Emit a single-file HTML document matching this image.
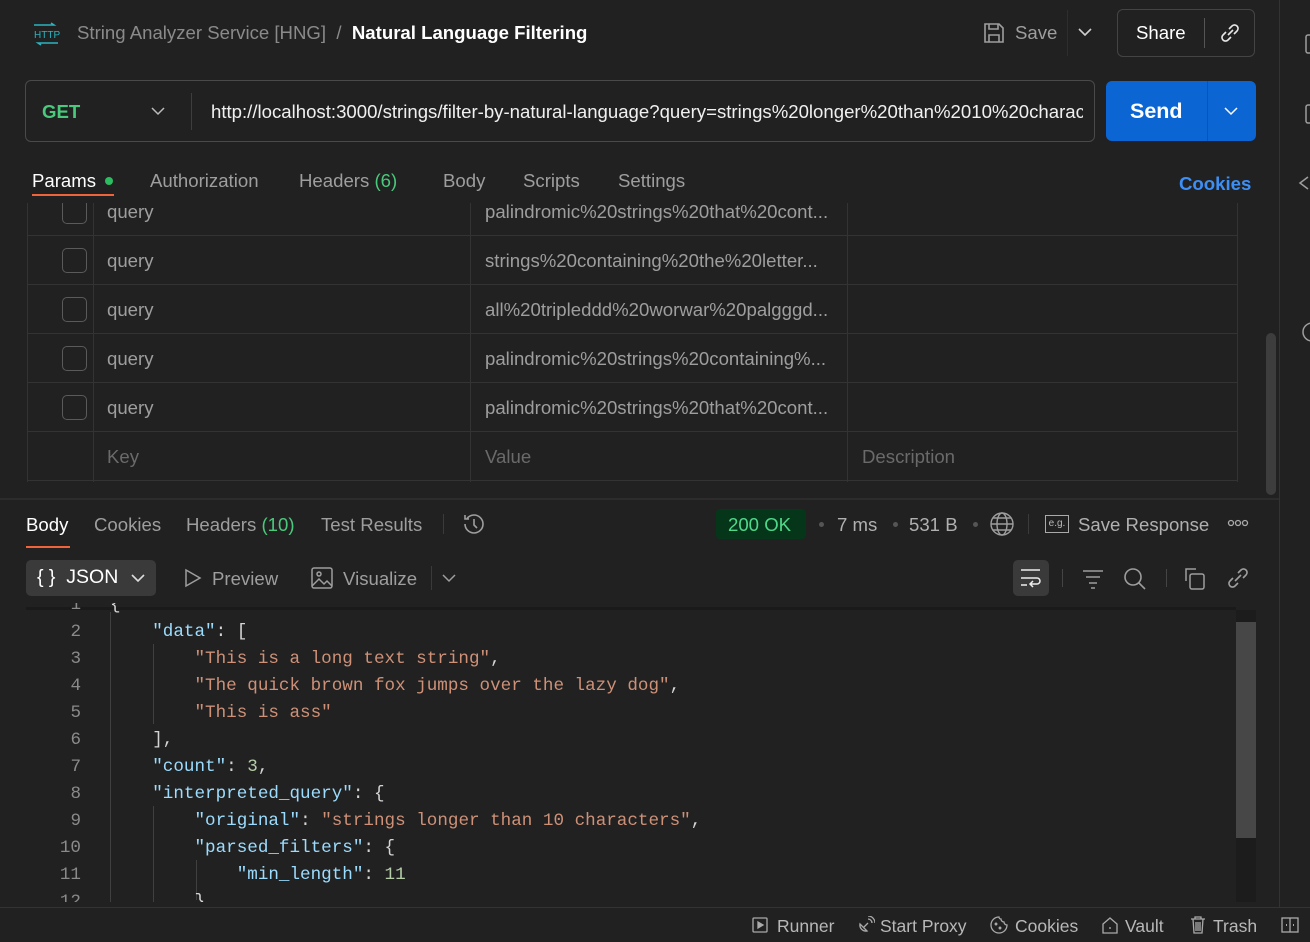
<!DOCTYPE html>
<html><head><meta charset="utf-8"><style>
*{box-sizing:border-box;margin:0;padding:0}
body{width:1310px;height:942px;background:#212121;font-family:"Liberation Sans",sans-serif;color:#e6e6e6;position:relative;overflow:hidden}
.a{position:absolute;white-space:nowrap}
.g{color:#9e9e9e}
.f{font-size:18.6px}
.mono{font-family:"Liberation Mono",monospace;font-size:17.6px}
.k{color:#9cdcfe}.s{color:#ce9178}.n{color:#b5cea8}.p{color:#d4d4d4}
.row{position:absolute;left:27px;width:1210px;height:49px;border-bottom:1px solid #333}
.cb{position:absolute;left:35px;top:12px;width:25px;height:25px;border:1px solid #5a5a5a;border-radius:5px}
.vl{position:absolute;width:1px;background:#333}
.dot{position:absolute;width:5px;height:5px;border-radius:50%;background:#555}
</style></head><body>
<div class="a" style="left:1279px;top:0;width:1px;height:908px;background:#333"></div>
<svg class="a" style="left:1296px;top:30px" width="14" height="320" fill="none" stroke="#9e9e9e" stroke-width="1.5"><rect x="10" y="5" width="10" height="18" rx="2"/><rect x="10" y="75" width="10" height="18" rx="2"/><path d="M12 147l-8 6 8 6"/><circle cx="16" cy="302" r="9"/></svg>
<svg class="a" style="left:32px;top:22px" width="28" height="24" fill="none" stroke="#2bb3c0" stroke-width="1.5"><path d="M2 3h20l-3-2M26 21H6l3 2"/><text x="2" y="16" font-size="10" fill="#2bb3c0" stroke="none" font-family="Liberation Sans">HTTP</text></svg>
<div class="a f" style="left:77px;top:22px;color:#8a8a8a">String Analyzer Service [HNG]&nbsp; /&nbsp; <b style="color:#fff">Natural Language Filtering</b></div>
<svg class="a" style="left:982px;top:21px" width="24" height="24" fill="none" stroke="#9e9e9e" stroke-width="1.6"><path d="M3 3h14l4 4v14H3z"/><path d="M7 3v5h9V3M7 21v-7h10v7"/></svg>
<div class="a g f" style="left:1015px;top:22px">Save</div>
<div class="a" style="left:1067px;top:10px;width:1px;height:46px;background:#2e2e2e"></div>
<svg class="a" style="left:1078px;top:27px" width="14" height="10" fill="none" stroke="#cfcfcf" stroke-width="1.6"><path d="M1 2l6 6 6-6"/></svg>
<div class="a" style="left:1117px;top:9px;width:138px;height:48px;border:1px solid #444;border-radius:6px"></div>
<div class="a f" style="left:1136px;top:22px;color:#fff">Share</div>
<div class="a" style="left:1204px;top:18px;width:1px;height:30px;background:#555"></div>
<svg class="a" style="left:1217px;top:20px" width="26" height="26" fill="none" stroke="#e6e6e6" stroke-width="1.6"><path d="M11 15l5-5M9 12l-3 3a3.5 3.5 0 005 5l3-3M17 14l3-3a3.5 3.5 0 00-5-5l-3 3"/></svg>
<div class="a" style="left:25px;top:80px;width:1070px;height:62px;border:1px solid #4a4a4a;border-radius:6px"></div>
<div class="a f" style="left:42px;top:101px;font-weight:bold;color:#49c97b">GET</div>
<svg class="a" style="left:151px;top:106px" width="14" height="10" fill="none" stroke="#bbb" stroke-width="1.5"><path d="M1 2l6 6 6-6"/></svg>
<div class="a" style="left:191px;top:93px;width:1px;height:37px;background:#3e3e3e"></div>
<div class="a f" style="left:211px;top:101px;color:#f0f0f0;width:872px;overflow:hidden">http://localhost:3000/strings/filter-by-natural-language?query=strings%20longer%20than%2010%20characters</div>
<div class="a" style="left:1106px;top:81px;width:150px;height:60px;background:#0b66d4;border-radius:6px"></div>
<div class="a" style="left:1207px;top:81px;width:1px;height:60px;background:#0a55b0"></div>
<div class="a" style="left:1130px;top:99px;font-size:21.5px;font-weight:bold;color:#fff">Send</div>
<svg class="a" style="left:1224px;top:106px" width="14" height="10" fill="none" stroke="#fff" stroke-width="1.5"><path d="M1 2l6 6 6-6"/></svg>
<div class="a f" style="left:32px;top:170px;color:#fff">Params</div>
<div class="a" style="left:105px;top:177px;width:8px;height:8px;border-radius:50%;background:#2bbd5f"></div>
<div class="a g f" style="left:150px;top:170px">Authorization</div>
<div class="a g f" style="left:299px;top:170px">Headers <span style="color:#49c97b">(6)</span></div>
<div class="a g f" style="left:443px;top:170px">Body</div>
<div class="a g f" style="left:523px;top:170px">Scripts</div>
<div class="a g f" style="left:618px;top:170px">Settings</div>
<div class="a f" style="left:1179px;top:173px;font-weight:bold;color:#3d8ff5">Cookies</div>
<div class="a" style="left:27px;top:203px;width:1211px;height:279px;overflow:hidden">
<div class="vl" style="left:0;top:0;height:279px"></div><div class="vl" style="left:66px;top:0;height:279px"></div><div class="vl" style="left:443px;top:0;height:279px"></div><div class="vl" style="left:820px;top:0;height:279px"></div><div class="vl" style="left:1210px;top:0;height:279px"></div>
<div class="row" style="left:0;top:-16px"><div class="cb"></div><div class="a g f" style="left:80px;top:14px">query</div><div class="a g f" style="left:458px;top:14px">palindromic%20strings%20that%20cont...</div></div>
<div class="row" style="left:0;top:33px"><div class="cb"></div><div class="a g f" style="left:80px;top:14px">query</div><div class="a g f" style="left:458px;top:14px">strings%20containing%20the%20letter...</div></div>
<div class="row" style="left:0;top:82px"><div class="cb"></div><div class="a g f" style="left:80px;top:14px">query</div><div class="a g f" style="left:458px;top:14px">all%20tripleddd%20worwar%20palgggd...</div></div>
<div class="row" style="left:0;top:131px"><div class="cb"></div><div class="a g f" style="left:80px;top:14px">query</div><div class="a g f" style="left:458px;top:14px">palindromic%20strings%20containing%...</div></div>
<div class="row" style="left:0;top:180px"><div class="cb"></div><div class="a g f" style="left:80px;top:14px">query</div><div class="a g f" style="left:458px;top:14px">palindromic%20strings%20that%20cont...</div></div>
<div class="row" style="left:0;top:229px"><div class="a f" style="left:80px;top:14px;color:#6a6a6a">Key</div><div class="a f" style="left:458px;top:14px;color:#6a6a6a">Value</div><div class="a f" style="left:835px;top:14px;color:#6a6a6a">Description</div></div>
</div>
<div class="a" style="left:32px;top:194px;width:82px;height:2px;background:#f0643c"></div>
<div class="a" style="left:1266px;top:333px;width:10px;height:162px;background:#3d3d3d;border-radius:5px"></div>
<div class="a" style="left:0;top:498px;width:1279px;height:2px;background:#2c2c2c"></div>
<div class="a f" style="left:26px;top:514px;color:#fff">Body</div>
<div class="a" style="left:26px;top:546px;width:44px;height:2px;background:#f0643c"></div>
<div class="a g f" style="left:94px;top:514px">Cookies</div>
<div class="a g f" style="left:186px;top:514px">Headers <span style="color:#49c97b">(10)</span></div>
<div class="a g f" style="left:321px;top:514px">Test Results</div>
<div class="a" style="left:443px;top:514px;width:1px;height:20px;background:#3a3a3a"></div>
<svg class="a" style="left:461px;top:512px" width="26" height="24" fill="none" stroke="#9e9e9e" stroke-width="1.6"><path d="M4 12a9 9 0 109-9 9 9 0 00-7 3.5M4 3v4h4M13 7v6l3 3"/></svg>
<div class="a" style="left:716px;top:509px;width:90px;height:30px;background:#06361a;border-radius:4px"></div>
<div class="a f" style="left:728px;top:514px;color:#4fd88a">200 OK</div>
<div class="dot" style="left:819px;top:522px"></div>
<div class="a f" style="left:837px;top:514px;color:#b0b0b0">7 ms</div>
<div class="dot" style="left:893px;top:522px"></div>
<div class="a f" style="left:909px;top:514px;color:#b0b0b0">531 B</div>
<div class="dot" style="left:973px;top:522px"></div>
<svg class="a" style="left:989px;top:511px" width="26" height="26" fill="none" stroke="#9e9e9e" stroke-width="1.4"><circle cx="13" cy="13" r="11"/><ellipse cx="13" cy="13" rx="5" ry="11"/><path d="M2 13h22M4 7h18M4 19h18"/></svg>
<div class="a" style="left:1028px;top:514px;width:1px;height:20px;background:#3a3a3a"></div>
<div class="a" style="left:1045px;top:515px;width:24px;height:18px;border:1px solid #aaa;font-size:10px;color:#bbb;text-align:center;line-height:16px">e.g.</div>
<div class="a f" style="left:1078px;top:514px;color:#b0b0b0">Save Response</div>
<svg class="a" style="left:1227px;top:519px" width="22" height="8" fill="none" stroke="#aaa" stroke-width="1.3"><circle cx="4" cy="4" r="2.5"/><circle cx="11" cy="4" r="2.5"/><circle cx="18" cy="4" r="2.5"/></svg>
<div class="a" style="left:26px;top:560px;width:130px;height:36px;background:#3a3a3a;border-radius:5px"></div>
<div class="a" style="left:37px;top:566px;font-size:19.5px;color:#fff">{ }&nbsp; JSON</div>
<svg class="a" style="left:131px;top:573px" width="14" height="10" fill="none" stroke="#ddd" stroke-width="1.6"><path d="M1 2l6 6 6-6"/></svg>
<svg class="a" style="left:184px;top:568px" width="18" height="20" fill="none" stroke="#9e9e9e" stroke-width="1.5"><path d="M2 2l14 8-14 8z"/></svg>
<div class="a g f" style="left:212px;top:568px">Preview</div>
<svg class="a" style="left:311px;top:567px" width="22" height="22" fill="none" stroke="#9e9e9e" stroke-width="1.5"><rect x="1" y="1" width="20" height="20" rx="2"/><circle cx="8" cy="7" r="2"/><path d="M1 19l7-7 5 5 3-3 5 5"/></svg>
<div class="a g f" style="left:343px;top:568px">Visualize</div>
<div class="a" style="left:431px;top:566px;width:1px;height:24px;background:#3a3a3a"></div>
<svg class="a" style="left:442px;top:573px" width="14" height="10" fill="none" stroke="#9e9e9e" stroke-width="1.5"><path d="M1 2l6 6 6-6"/></svg>
<div class="a" style="left:1013px;top:560px;width:36px;height:36px;background:#3a3a3a;border-radius:5px"></div>
<svg class="a" style="left:1019px;top:568px" width="24" height="22" fill="none" stroke="#eee" stroke-width="1.5"><path d="M2 2h19M2 10h16a3 3 0 010 6h-6M14 13l-3 3 3 3M2 17h6"/></svg>
<div class="a" style="left:1062px;top:569px;width:1px;height:18px;background:#444"></div>
<svg class="a" style="left:1081px;top:568px" width="24" height="22" fill="none" stroke="#9e9e9e" stroke-width="1.5"><path d="M2 3h20M5 9h14M8 15h8M10 20h4"/></svg>
<svg class="a" style="left:1122px;top:566px" width="26" height="26" fill="none" stroke="#9e9e9e" stroke-width="1.6"><circle cx="11" cy="11" r="8"/><path d="M17 17l6 6"/></svg>
<div class="a" style="left:1166px;top:569px;width:1px;height:18px;background:#444"></div>
<svg class="a" style="left:1183px;top:566px" width="26" height="26" fill="none" stroke="#9e9e9e" stroke-width="1.5"><path d="M3 15V3h10"/><rect x="7" y="8" width="14" height="15" rx="2"/></svg>
<svg class="a" style="left:1225px;top:565px" width="26" height="26" fill="none" stroke="#9e9e9e" stroke-width="1.6"><path d="M10 16l6-6M8 13l-3 3a3.5 3.5 0 005 5l3-3M18 13l3-3a3.5 3.5 0 00-5-5l-3 3"/></svg>
<div class="a" style="left:26px;top:607px;width:1210px;height:3px;background:#1a1a1a"></div>
<div class="a" style="left:1236px;top:610px;width:20px;height:292px;background:#1c1c1c"></div>
<div class="a" style="left:1236px;top:622px;width:20px;height:216px;background:#474747"></div>
<div class="a" style="left:110px;top:612px;width:1px;height:290px;background:#404040"></div>
<div class="a" style="left:153px;top:644px;width:1px;height:80px;background:#404040"></div>
<div class="a" style="left:153px;top:806px;width:1px;height:96px;background:#404040"></div>
<div class="a" style="left:196px;top:860px;width:1px;height:40px;background:#404040"></div>
<div class="a mono" style="left:26px;top:603px;width:1208px;height:299px;overflow:hidden;line-height:27px">
<pre class="mono" style="position:absolute;left:0;top:-11px;width:55px;text-align:right;color:#8a8a8a;line-height:27px">1
2
3
4
5
6
7
8
9
10
11
12</pre>
<pre class="mono p" style="position:absolute;left:84px;top:-11px;line-height:27px">{
    <span class="k">"data"</span>: [
        <span class="s">"This is a long text string"</span>,
        <span class="s">"The quick brown fox jumps over the lazy dog"</span>,
        <span class="s">"This is ass"</span>
    ],
    <span class="k">"count"</span>: <span class="n">3</span>,
    <span class="k">"interpreted_query"</span>: {
        <span class="k">"original"</span>: <span class="s">"strings longer than 10 characters"</span>,
        <span class="k">"parsed_filters"</span>: {
            <span class="k">"min_length"</span>: <span class="n">11</span>
        }</pre>
</div>
<div class="a" style="left:0;top:907px;width:1310px;height:1px;background:#333"></div>
<svg class="a" style="left:752px;top:917px" width="16" height="16" fill="none" stroke="#aaa" stroke-width="1.3"><rect x="1" y="1" width="14" height="14" rx="1"/><path d="M6 5l5 3-5 3z" fill="#aaa"/></svg>
<div class="a" style="left:777px;top:916px;font-size:17.5px;color:#b8b8b8">Runner</div>
<svg class="a" style="left:857px;top:916px" width="18" height="18" fill="none" stroke="#aaa" stroke-width="1.3"><path d="M3 8a6 6 0 007 7L3 8zM7 11l4-4M11 3a4 4 0 014 4M11 0a7 7 0 017 7"/></svg>
<div class="a" style="left:880px;top:916px;font-size:17.5px;color:#b8b8b8">Start Proxy</div>
<svg class="a" style="left:990px;top:916px" width="18" height="18" fill="none" stroke="#aaa" stroke-width="1.3"><path d="M9 1a8 8 0 108 8 3 3 0 01-3-3 3 3 0 01-3-3 2 2 0 01-2-2z"/><circle cx="6" cy="8" r=".8" fill="#aaa"/><circle cx="10" cy="12" r=".8" fill="#aaa"/></svg>
<div class="a" style="left:1015px;top:916px;font-size:17.5px;color:#b8b8b8">Cookies</div>
<svg class="a" style="left:1101px;top:916px" width="18" height="18" fill="none" stroke="#aaa" stroke-width="1.3"><path d="M2 8l7-6 7 6v9H2z"/><path d="M9 11v2"/></svg>
<div class="a" style="left:1125px;top:916px;font-size:17.5px;color:#b8b8b8">Vault</div>
<svg class="a" style="left:1190px;top:916px" width="16" height="18" fill="none" stroke="#aaa" stroke-width="1.3"><path d="M1 3h14M5 3V1h6v2M3 3l1 14h8l1-14M6 6v9M8 6v9M10 6v9"/></svg>
<div class="a" style="left:1213px;top:916px;font-size:17.5px;color:#b8b8b8">Trash</div>
<svg class="a" style="left:1281px;top:917px" width="18" height="16" fill="none" stroke="#aaa" stroke-width="1.3"><rect x="1" y="1" width="16" height="14"/><path d="M9 1v14"/><path d="M5 8h1M12 8h1" stroke-width="2"/></svg>
</body></html>
